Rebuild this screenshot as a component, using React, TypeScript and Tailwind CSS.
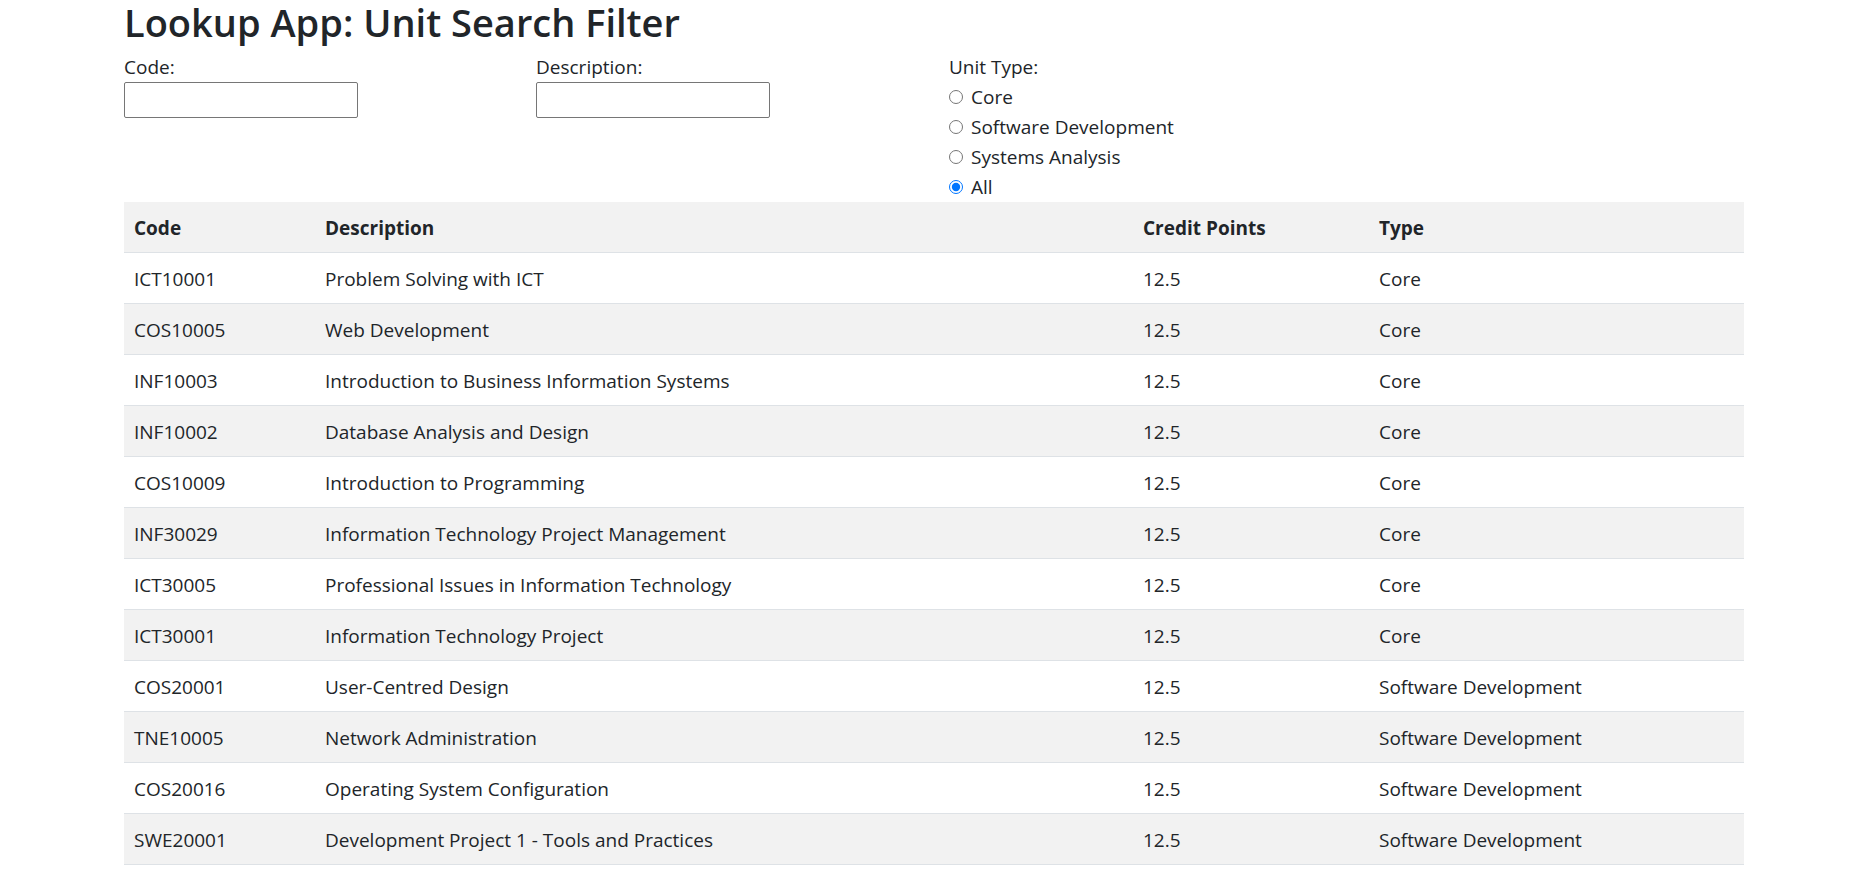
import { useState } from 'react'

interface Unit { code: string; desc: string; cp: string; type: string }

const UNITS: Unit[] = [
  { code: 'ICT10001', desc: 'Problem Solving with ICT', cp: '12.5', type: 'Core' },
  { code: 'COS10005', desc: 'Web Development', cp: '12.5', type: 'Core' },
  { code: 'INF10003', desc: 'Introduction to Business Information Systems', cp: '12.5', type: 'Core' },
  { code: 'INF10002', desc: 'Database Analysis and Design', cp: '12.5', type: 'Core' },
  { code: 'COS10009', desc: 'Introduction to Programming', cp: '12.5', type: 'Core' },
  { code: 'INF30029', desc: 'Information Technology Project Management', cp: '12.5', type: 'Core' },
  { code: 'ICT30005', desc: 'Professional Issues in Information Technology', cp: '12.5', type: 'Core' },
  { code: 'ICT30001', desc: 'Information Technology Project', cp: '12.5', type: 'Core' },
  { code: 'COS20001', desc: 'User-Centred Design', cp: '12.5', type: 'Software Development' },
  { code: 'TNE10005', desc: 'Network Administration', cp: '12.5', type: 'Software Development' },
  { code: 'COS20016', desc: 'Operating System Configuration', cp: '12.5', type: 'Software Development' },
  { code: 'SWE20001', desc: 'Development Project 1 - Tools and Practices', cp: '12.5', type: 'Software Development' },
]

const TYPES = ['Core', 'Software Development', 'Systems Analysis', 'All']

export default function App() {
  const [code, setCode] = useState('')
  const [desc, setDesc] = useState('')
  const [type, setType] = useState('All')

  const rows = UNITS.filter(u =>
    u.code.toLowerCase().includes(code.toLowerCase()) &&
    u.desc.toLowerCase().includes(desc.toLowerCase()) &&
    (type === 'All' || u.type === type)
  )

  return (
    <div className="min-h-screen bg-white text-[#212529] text-[19px] leading-[30px]" style={{ fontFamily: '"Open Sans", "Noto Sans", sans-serif' }}>
      <div className="ml-[124px] w-[1620px]">
        <h1 className="text-[38px] leading-[44px] font-semibold mb-[8px]">Lookup App: Unit Search Filter</h1>

        {/* Filters */}
        <div className="grid grid-cols-[412px_412px_1fr] h-[150px]">
          <div>
            <label className="block">Code:</label>
            <input className="w-[234px] h-[36px] border border-[#767676] rounded-[2px] px-2 outline-none" value={code} onChange={e => setCode(e.target.value)} />
          </div>
          <div>
            <label className="block">Description:</label>
            <input className="w-[234px] h-[36px] border border-[#767676] rounded-[2px] px-2 outline-none" value={desc} onChange={e => setDesc(e.target.value)} />
          </div>
          <div className="pl-[1px]">
            <div>Unit Type:</div>
            {TYPES.map(t => (
              <label key={t} className="flex items-center">
                <input type="radio" name="unitType" checked={type === t} onChange={() => setType(t)} className="w-[14px] h-[14px] m-0 mr-[8px] accent-[#0075ff]" />
                <span>{t}</span>
              </label>
            ))}
          </div>
        </div>

        {/* Results */}
        <table className="w-full border-collapse">
          <thead>
            <tr className="bg-[#f2f2f2] border-b border-[#dee2e6]">
              <th className="w-[191px] text-left font-bold px-[10px] pt-[11px] pb-[9px]">Code</th>
              <th className="w-[818px] text-left font-bold px-[10px] pt-[11px] pb-[9px]">Description</th>
              <th className="w-[236px] text-left font-bold px-[10px] pt-[11px] pb-[9px]">Credit Points</th>
              <th className="text-left font-bold px-[10px] pt-[11px] pb-[9px]">Type</th>
            </tr>
          </thead>
          <tbody>
            {rows.map((u, i) => (
              <tr key={u.code} className={`border-b border-[#dee2e6] ${i % 2 === 1 ? 'bg-[#f2f2f2]' : 'bg-white'}`}>
                <td className="px-[10px] pt-[11px] pb-[9px]">{u.code}</td>
                <td className="px-[10px] pt-[11px] pb-[9px]">{u.desc}</td>
                <td className="px-[10px] pt-[11px] pb-[9px]">{u.cp}</td>
                <td className="px-[10px] pt-[11px] pb-[9px]">{u.type}</td>
              </tr>
            ))}
          </tbody>
        </table>
      </div>
    </div>
  )
}
